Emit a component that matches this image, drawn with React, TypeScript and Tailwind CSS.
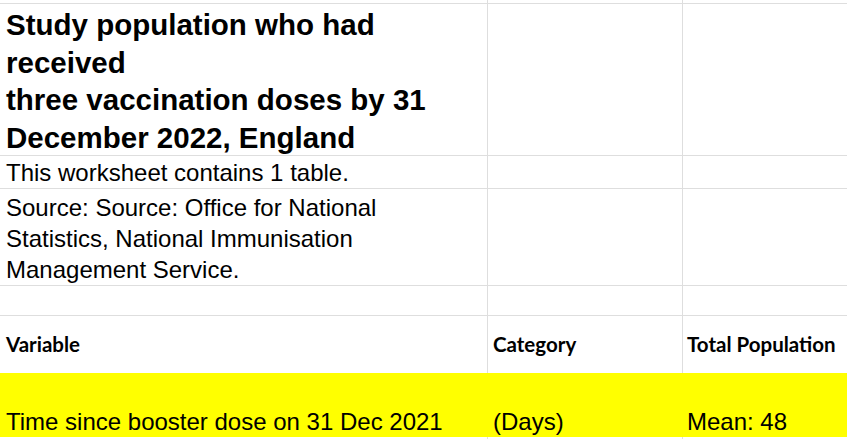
import React from 'react';

const line = 'border-[#dedede]';

interface RowProps {
    h: string;
    cells: React.ReactNode[];
    bottom?: boolean;
    align?: string;
    bg?: string;
    grid?: boolean;
}

const Row: React.FC<RowProps> = ({ h, cells, bottom = true, align = 'items-start', bg = '', grid = true }) => (
    <div className={`flex ${h} ${bg} ${bottom ? `border-b ${line}` : ''}`}>
        {cells.map((c, i) => (
            <div
                key={i}
                className={`flex ${align} ${i === 0 ? 'w-[488px] pl-[6px]' : i === 1 ? 'w-[195px] pl-[5px]' : 'flex-1 pl-[4px]'} ${grid && i < 2 ? `border-r ${line}` : ''}`}
            >
                {c}
            </div>
        ))}
    </div>
);

export default function App() {
    const arial = { fontFamily: '"Liberation Sans", Arial, sans-serif' };
    const head = 'font-["Lato",sans-serif] font-bold text-[20.5px] text-black';

    return (
        <div className="w-[847px] h-[439px] bg-white overflow-hidden text-black" style={arial}>
            <Row h="h-[4px]" cells={[null, null, null]} />
            <Row
                h="h-[152px]"
                cells={[
                    <h1 className="text-[29.5px] font-bold leading-[37.5px] pt-[2px] pr-[30px]">
                        Study population who had<br />received<br />three vaccination doses by 31 December 2022, England
                    </h1>,
                    null,
                    null
                ]}
            />
            <Row
                h="h-[33px]"
                align="items-center"
                cells={[<p className="text-[24px] leading-[28px] pt-[1px]">This worksheet contains 1 table.</p>, null, null]}
            />
            <Row
                h="h-[97px]"
                cells={[
                    <p className="text-[24px] leading-[31px] pt-[3px] pr-[90px]">
                        Source: Source: Office for National Statistics, National Immunisation Management Service.
                    </p>,
                    null,
                    null
                ]}
            />
            <Row h="h-[30px]" cells={[null, null, null]} />
            <Row
                h="h-[57px]"
                bottom={false}
                align="items-center"
                cells={[
                    <span className={head}>Variable</span>,
                    <span className={head}>Category</span>,
                    <span className={`${head} whitespace-nowrap`}>Total Population</span>
                ]}
            />
            <Row
                h="h-[64px]"
                bottom={false}
                grid={false}
                bg="bg-[#ffff00]"
                align="items-end pb-[1px]"
                cells={[
                    <span className="text-[24px] leading-[28px]">Time since booster dose on 31 Dec 2021</span>,
                    <span className="text-[24px] leading-[28px]">(Days)</span>,
                    <span className="text-[24px] leading-[28px]">Mean: 48</span>
                ]}
            />
            <Row h="h-[4px]" bottom={false} cells={[null, null, null]} />
        </div>
    );
}
